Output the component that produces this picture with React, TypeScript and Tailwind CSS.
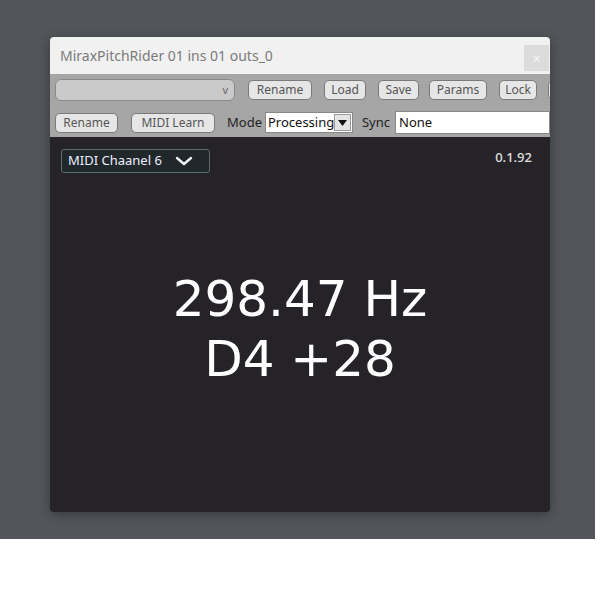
import React from 'react';

const ui = { fontFamily: '"Noto Sans", "Open Sans", sans-serif' };

function ToolButton({ label, className = '' }: { label: string; className?: string }) {
  return (
    <button
      type="button"
      className={`h-[20px] shrink-0 rounded-[5px] border border-[#7a7a7a] bg-[#e6e6e6] text-[12px] leading-none text-[#555] ${className}`}
    >
      {label}
    </button>
  );
}

export default function App() {
  return (
    <div className="w-[600px] h-[600px] bg-white" style={ui}>
      <div className="w-[595px] h-[539px] bg-[#52555a] pt-[37px] pl-[50px]">
        <div className="w-[500px] h-[475px] flex flex-col rounded-[4px] overflow-hidden shadow-[0_2px_12px_rgba(0,0,0,0.35)]">
          {/* title bar */}
          <div className="h-[37px] bg-[#f1f1f1] flex items-center justify-between pl-[10px] pr-[1px]">
            <span className="text-[14px] text-[#7b7b7b]">MiraxPitchRider 01 ins 01 outs_0</span>
            <div className="w-[25px] h-[26px] bg-[#dcdcdc] flex items-center justify-center text-[#f4f4f4] text-[14px] mt-[5px]">
              ×
            </div>
          </div>

          {/* preset row */}
          <div className="h-[30px] bg-[#a6a6a6] flex items-center pl-[5px] pt-[1px] overflow-hidden">
            <div className="w-[180px] h-[22px] shrink-0 rounded-[6px] border border-[#8a8a8a] bg-[#c9c9c9] flex items-end justify-end pr-[6px] pb-[1px] text-[11px] text-[#666]">
              v
            </div>
            <ToolButton label="Rename" className="w-[64px] ml-[13px]" />
            <ToolButton label="Load" className="w-[42px] ml-[12px]" />
            <ToolButton label="Save" className="w-[41px] ml-[12px]" />
            <ToolButton label="Params" className="w-[58px] ml-[10px]" />
            <ToolButton label="Lock" className="w-[38px] ml-[12px]" />
            <div className="w-[6px] h-[20px] shrink-0 ml-[11px] rounded-l-[5px] border border-[#7a7a7a] bg-[#e6e6e6]" />
          </div>

          {/* midi / mode row */}
          <div className="h-[33px] bg-[#a6a6a6] flex items-center pl-[5px] pt-[4px] overflow-hidden">
            <ToolButton label="Rename" className="w-[63px]" />
            <ToolButton label="MIDI Learn" className="w-[84px] ml-[13px]" />
            <span className="ml-[12px] text-[13px] text-[#222]">Mode</span>
            <div className="ml-[3px] w-[88px] h-[21px] shrink-0 bg-white border border-[#888] flex items-center">
              <span className="flex-1 pl-[2px] text-[13px] text-[#111] leading-none">Processing</span>
              <div className="w-[18px] h-[17px] mr-[1px] bg-[#e4e4e4] border border-[#999] flex items-center justify-center">
                <svg width="9" height="6" viewBox="0 0 9 6">
                  <path d="M0 0h9L4.5 6z" fill="#111" />
                </svg>
              </div>
            </div>
            <span className="ml-[9px] text-[13px] text-[#222]">Sync</span>
            <div className="ml-[5px] flex-1 h-[23px] bg-white border border-[#888] flex items-center pl-[3px] text-[13px] text-[#111]">
              None
            </div>
          </div>

          {/* display */}
          <div className="flex-1 bg-[#252328] flex flex-col px-[11px] pt-[12px]">
            <div className="flex items-start justify-between">
              <div className="w-[149px] h-[24px] rounded-[3px] border border-[#5d6b6d] bg-[#20282c] flex items-center pl-[6px] gap-[13px] text-[13px] text-[#eef]">
                <span>MIDI Chaanel 6</span>
                <svg width="18" height="10" viewBox="0 0 18 10">
                  <path d="M2 2l7 6 7-6" stroke="#f2f2f2" strokeWidth="2.4" fill="none" strokeLinecap="round" strokeLinejoin="round" />
                </svg>
              </div>
              <span className="mt-[-1px] mr-[7px] text-[13px] font-medium text-[#e0e0e0]">0.1.92</span>
            </div>
            <div
              className="mt-[96px] flex flex-col items-center text-[50px] leading-[60px] text-white"
              style={{ fontFamily: '"DejaVu Sans", sans-serif' }}
            >
              <span>298.47 Hz</span>
              <span>D4 +28</span>
            </div>
          </div>
        </div>
      </div>
    </div>
  );
}
